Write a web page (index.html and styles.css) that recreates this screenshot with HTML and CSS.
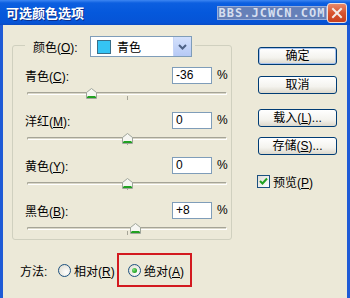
FILE: index.html
```html
<!DOCTYPE html>
<html lang="zh-CN">
<head>
  <meta charset="UTF-8">
  <title>可选颜色选项</title>
  <link rel="stylesheet" href="styles.css">
</head>
<body>
  <div class="window">
    <div class="titlebar">
      <span class="title">可选颜色选项</span>
      <span class="mark">BBS.JCWCN.COM</span>
      <span class="close">
        <svg width="20" height="20" viewBox="0 0 20 20">
          <path d="M6 6 L14 14 M14 6 L6 14" stroke="#f4ece8" stroke-width="2" stroke-linecap="square"/>
        </svg>
      </span>
    </div>
    <div class="frame">
      <div class="main">
        <div class="group">
          <div class="group-head">
            <div class="legend">
              <label class="legend-label">颜色(<u>O</u>):</label>
              <div class="select">
                <span class="swatch"></span>
                <span class="select-text">青色</span>
                <span class="select-arrow">
                  <svg width="9" height="6" viewBox="0 0 9 6">
                    <path d="M1 1 L4.5 4.5 L8 1" stroke="#4d6185" stroke-width="2" fill="none"/>
                  </svg>
                </span>
              </div>
            </div>
          </div>

          <div class="row">
            <div class="line">
              <label>青色(<u>C</u>):</label>
              <span class="field">-36</span>
              <span class="pct">%</span>
            </div>
            <div class="slider">
              <div class="track"></div>
              <span class="tick"></span>
              <svg class="thumb" style="left: 59px" width="11" height="11" viewBox="0 0 11 11"><path d="M0.5 4.5 L5.5 0.5 L10.5 4.5 L10.5 10.5 L0.5 10.5 Z" fill="#f6f6f2" stroke="#9ea59a"/><path d="M1 9.5 H10 M1.5 8.5 H9.5" stroke="#21a121"/></svg>
            </div>
          </div>

          <div class="row">
            <div class="line">
              <label>洋红(<u>M</u>):</label>
              <span class="field">0</span>
              <span class="pct">%</span>
            </div>
            <div class="slider">
              <div class="track"></div>
              <span class="tick"></span>
              <svg class="thumb" style="left: 95px" width="11" height="11" viewBox="0 0 11 11"><path d="M0.5 4.5 L5.5 0.5 L10.5 4.5 L10.5 10.5 L0.5 10.5 Z" fill="#f6f6f2" stroke="#9ea59a"/><path d="M1 9.5 H10 M1.5 8.5 H9.5" stroke="#21a121"/></svg>
            </div>
          </div>

          <div class="row">
            <div class="line">
              <label>黄色(<u>Y</u>):</label>
              <span class="field">0</span>
              <span class="pct">%</span>
            </div>
            <div class="slider">
              <div class="track"></div>
              <span class="tick"></span>
              <svg class="thumb" style="left: 95px" width="11" height="11" viewBox="0 0 11 11"><path d="M0.5 4.5 L5.5 0.5 L10.5 4.5 L10.5 10.5 L0.5 10.5 Z" fill="#f6f6f2" stroke="#9ea59a"/><path d="M1 9.5 H10 M1.5 8.5 H9.5" stroke="#21a121"/></svg>
            </div>
          </div>

          <div class="row">
            <div class="line">
              <label>黑色(<u>B</u>):</label>
              <span class="field">+8</span>
              <span class="pct">%</span>
            </div>
            <div class="slider">
              <div class="track"></div>
              <span class="tick"></span>
              <svg class="thumb" style="left: 103px" width="11" height="11" viewBox="0 0 11 11"><path d="M0.5 4.5 L5.5 0.5 L10.5 4.5 L10.5 10.5 L0.5 10.5 Z" fill="#f6f6f2" stroke="#9ea59a"/><path d="M1 9.5 H10 M1.5 8.5 H9.5" stroke="#21a121"/></svg>
            </div>
          </div>
        </div>

        <div class="method">
          <span class="method-label">方法:</span>
          <span class="opt opt-first"><span class="radio"></span><span class="opt-text">相对(<u>R</u>)</span></span>
          <span class="opt highlight"><span class="radio checked"></span><span class="opt-text">绝对(<u>A</u>)</span></span>
        </div>
      </div>

      <div class="side">
        <div class="btn btn-default">确定</div>
        <div class="btn btn-cancel">取消</div>
        <div class="btn btn-load">载入(<u>L</u>)...</div>
        <div class="btn btn-save">存储(<u>S</u>)...</div>
        <div class="check-row">
          <span class="checkbox">
            <svg width="11" height="11" viewBox="0 0 11 11">
              <path d="M2 5 L4.5 7.5 L9 2.5" stroke="#21a121" stroke-width="2" fill="none"/>
            </svg>
          </span>
          <span class="opt-text">预览(<u>P</u>)</span>
        </div>
      </div>
    </div>
  </div>
</body>
</html>
```

FILE: styles.css
```css
body {
  margin: 0;
  background-color: #ece9d8;
  font-family: "Liberation Sans", "Noto Sans CJK SC", sans-serif;
  font-size: 12px;
  color: #000;
}
.window {
  width: 350px;
  height: 298px;
  display: flex;
  flex-direction: column;
  overflow: hidden;
}
.titlebar {
  height: 25px;
  flex: none;
  display: flex;
  align-items: center;
  padding-left: 6px;
  background: linear-gradient(to bottom, #3d86f2 0, #0c5fe0 3px, #0558dc 50%, #0654d6 90%, #0a4cc4 100%);
}
.title {
  flex: 1;
  color: #fff;
  font-family: "Noto Sans CJK SC", sans-serif;
  font-weight: bold;
  font-size: 13px;
  text-shadow: 1px 1px 0 #0b2f8c;
}
.mark {
  width: 110px;
  height: 14px;
  box-sizing: border-box;
  background-color: #6580b8;
  border: 1px solid #97acd8;
  color: #d6dff0;
  font-family: "DejaVu Sans Mono", monospace;
  font-weight: bold;
  font-size: 12px;
  line-height: 12px;
  letter-spacing: 1px;
  text-align: center;
  overflow: hidden;
}
.close {
  width: 20px;
  height: 20px;
  margin-right: 3px;
  box-sizing: border-box;
  border: 1px solid #f0e0dc;
  border-radius: 3px;
  background: linear-gradient(to bottom, #e88a6c, #d8532e 50%, #c8401e);
  display: flex;
  align-items: center;
  justify-content: center;
}
.close svg {
  display: block;
  margin: -1px;
}
.frame {
  flex: 1;
  display: flex;
  border-left: 3px solid #1f5bd6;
  border-right: 3px solid #1f5bd6;
}
.main {
  width: 220px;
  padding: 20px 0 0 9px;
}
.group {
  border: 1px solid #d0d0bf;
  border-radius: 3px;
  display: flex;
  flex-direction: column;
  gap: 7px;
}
.group-head {
  height: 21px;
  margin: -10px 0 2px 0;
}
.legend {
  display: inline-flex;
  align-items: center;
  height: 21px;
  margin-left: 12px;
  padding: 0 3px 0 8px;
  background-color: #ece9d8;
}
.legend-label {
  width: 57px;
}
.select {
  width: 102px;
  height: 21px;
  box-sizing: border-box;
  border: 1px solid #7f9db9;
  background-color: #fff;
  display: flex;
  align-items: center;
  padding-left: 6px;
}
.swatch {
  width: 14px;
  height: 14px;
  box-sizing: border-box;
  background-color: #35c4f4;
  border: 1px solid #3a6e88;
}
.select-text {
  flex: 1;
  margin-left: 6px;
}
.select-arrow {
  width: 17px;
  height: 19px;
  display: flex;
  align-items: center;
  justify-content: center;
  background: linear-gradient(to bottom, #d4e1fc, #b6c9f5);
  border-left: 1px solid #c6d5f7;
}
.row {
  height: 38px;
  padding: 0 4px 0 12px;
}
.line {
  height: 18px;
  display: flex;
  align-items: center;
}
.line label {
  flex: 1;
}
.field {
  width: 40px;
  height: 17px;
  box-sizing: border-box;
  border: 1px solid #7f9db9;
  background-color: #fff;
  padding-left: 3px;
  line-height: 15px;
}
.pct {
  width: 10px;
  margin-left: 5px;
}
.slider {
  position: relative;
  width: 200px;
  height: 20px;
  margin-left: 2px;
}
.track {
  position: relative;
  top: 8px;
  height: 1px;
  border-top: 1px solid #a5a497;
  border-bottom: 1px solid #fff;
  border-left: 1px solid #a5a497;
  border-right: 1px solid #fff;
  border-radius: 2px;
  background-color: #dad7c8;
}
.tick {
  position: absolute;
  left: 100px;
  top: 12px;
  width: 1px;
  height: 4px;
  background-color: #a5a497;
}
.thumb {
  position: absolute;
  top: 4px;
  display: block;
}
.method {
  height: 34px;
  margin-top: 13px;
  padding-left: 8px;
  display: flex;
  align-items: center;
}
.method-label {
  width: 38px;
}
.opt {
  flex: none;
  display: flex;
  align-items: center;
  gap: 3px;
  white-space: nowrap;
}
.opt-first {
  width: 59px;
}
.highlight {
  height: 34px;
  box-sizing: border-box;
  border: 2px solid #d3191f;
  padding: 0 6px 0 9px;
}
.radio {
  width: 13px;
  height: 13px;
  flex: none;
  box-sizing: border-box;
  border: 1px solid #1c5180;
  border-radius: 50%;
  background: radial-gradient(circle at 65% 65%, #fff, #e6e4da 70%, #d4d0c4);
  display: flex;
  align-items: center;
  justify-content: center;
}
.radio.checked::after {
  content: "";
  width: 5px;
  height: 5px;
  border-radius: 50%;
  background: radial-gradient(circle at 35% 35%, #7ee07e, #21a121 70%);
}
.side {
  width: 79px;
  margin-left: 26px;
  padding-top: 22px;
}
.btn {
  height: 18px;
  box-sizing: border-box;
  border: 1px solid #003c74;
  border-radius: 3px;
  background: linear-gradient(to bottom, #fff, #f4f3ee 60%, #dcd8cc);
  text-align: center;
  line-height: 16px;
}
.btn-default {
  box-shadow: inset 0 0 0 1px #a7c2ee;
}
.btn-cancel {
  margin-top: 11px;
}
.btn-load {
  margin-top: 15px;
}
.btn-save {
  margin-top: 10px;
}
.check-row {
  margin-top: 18px;
  margin-left: -1px;
  display: flex;
  align-items: center;
  gap: 3px;
  white-space: nowrap;
}
.checkbox {
  width: 13px;
  height: 13px;
  flex: none;
  box-sizing: border-box;
  border: 1px solid #1c5180;
  background: linear-gradient(135deg, #e0ded6, #fff);
  display: flex;
  align-items: center;
  justify-content: center;
}
.checkbox svg {
  display: block;
}
```
